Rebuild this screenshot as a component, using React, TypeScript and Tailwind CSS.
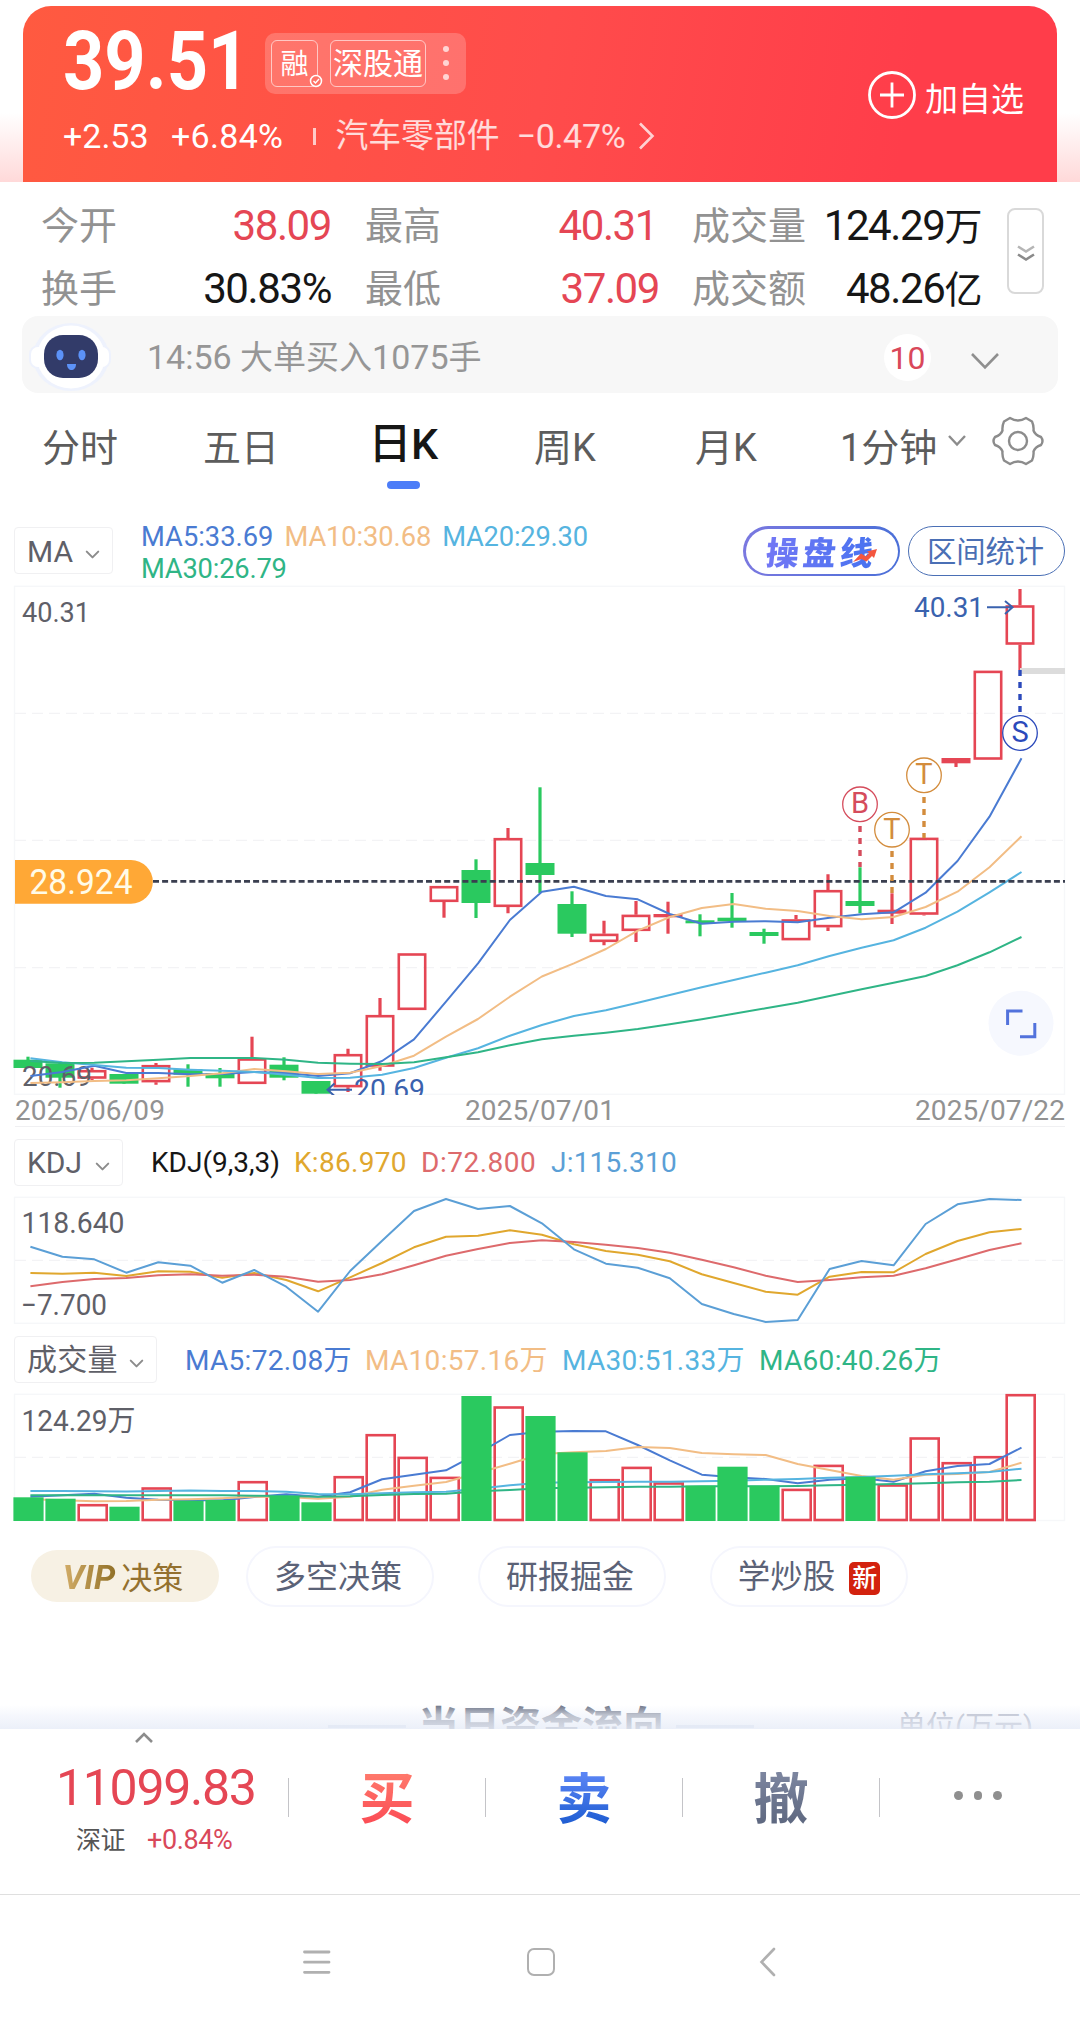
import { ChevronDown } from "lucide-react";

const RED = "#e54654";
const GREEN = "#2ac95f";
const FONT = "Roboto, 'Noto Sans CJK SC', sans-serif";

// [wick top, body top, body bottom, wick bottom, kind]  r = hollow red, f = flat red, g = green
type Candle = [number, number, number, number, "r" | "f" | "g"];

const candles: Candle[] = [
  [1056.7, 1059.7, 1068, 1068, "g"],
  [1063, 1063.3, 1077.7, 1087.7, "g"],
  [1067.7, 1070, 1078.7, 1080, "r"],
  [1074, 1074, 1083.7, 1083.7, "g"],
  [1063, 1065, 1082.3, 1084.7, "r"],
  [1064.3, 1069.3, 1074.7, 1086.7, "g"],
  [1068, 1073, 1078.3, 1086.7, "g"],
  [1036.7, 1058.3, 1084, 1084, "r"],
  [1057.3, 1064.7, 1077.7, 1080.3, "g"],
  [1081, 1081, 1093.7, 1093.7, "g"],
  [1048.7, 1054, 1087.3, 1092, "r"],
  [998, 1015, 1066.7, 1070.7, "r"],
  [953.3, 953.3, 1010, 1010, "r"],
  [886, 886, 902, 917.7, "r"],
  [859.3, 870, 903, 918, "g"],
  [828, 838, 907, 913.3, "r"],
  [787.3, 863, 875, 893, "g"],
  [891.3, 904, 933.7, 937, "g"],
  [920.7, 933.7, 942, 945.3, "r"],
  [901, 914.7, 931, 942, "r"],
  [901.7, 914, 917.3, 933.7, "f"],
  [914.3, 920.3, 923.3, 936.3, "g"],
  [893, 917.7, 921.3, 927.7, "g"],
  [928.7, 932, 936, 943.7, "g"],
  [915, 919.3, 940.3, 940.3, "r"],
  [874.3, 890, 927.3, 931, "r"],
  [867.3, 901, 906, 913.3, "g"],
  [893.3, 909.7, 913.7, 924, "f"],
  [837.7, 837.7, 914.7, 915.5, "r"],
  [758, 758, 763.3, 767, "f"],
  [670.7, 670.7, 759.7, 759.7, "r"],
  [589, 605.3, 644.7, 670, "r"],
];

const ma5 = [1076, 1072, 1065.7, 1073, 1073, 1074.2, 1074, 1072, 1073, 1076, 1073.3, 1061, 1039.3, 1001.7, 963.3, 920, 891.7, 886.7, 896, 899.3, 914, 923.7, 921.7, 921.3, 922.3, 917.7, 914.3, 912.3, 892.7, 861, 816.7, 758.3];
const ma10 = [1083, 1082.3, 1081, 1080.3, 1078.3, 1076, 1073.3, 1069, 1071.3, 1074, 1072.7, 1066, 1055.7, 1036.7, 1019, 996.7, 976.5, 963.3, 949, 930.7, 917, 908, 904, 908.7, 911, 916, 919.3, 917, 907, 891.7, 867.3, 836.3];
const ma20 = [1058.3, 1062.3, 1065, 1067.7, 1068, 1069.7, 1070.7, 1072, 1074.7, 1078, 1077.7, 1074.7, 1068, 1057.7, 1048.3, 1035.7, 1025, 1016, 1010.3, 1002.7, 995, 987.3, 980, 972.7, 965.3, 956, 947.7, 940.3, 927.7, 911.7, 892.3, 872];
const ma30 = [1061, 1063, 1062.7, 1061.3, 1059.7, 1058, 1058, 1058, 1059.7, 1062.7, 1063.7, 1064, 1062.3, 1057.3, 1052.3, 1045.3, 1039.3, 1035.7, 1032.7, 1029, 1024.3, 1019.3, 1013.7, 1008.3, 1002.7, 996, 989.3, 982.7, 976, 965.3, 952.3, 937];

const kdjJ = [1246.7, 1256.7, 1259.3, 1272.7, 1262.3, 1265.7, 1282.7, 1270, 1286.7, 1311.7, 1271, 1240.7, 1211, 1199, 1209, 1206, 1223.3, 1249.3, 1263.7, 1267.7, 1278.3, 1304, 1314, 1322, 1320, 1269, 1261, 1265.3, 1224, 1204.3, 1199, 1200];
const kdjK = [1273, 1273.7, 1272.7, 1276, 1271.3, 1271.7, 1277.7, 1273, 1280, 1291.3, 1277.3, 1263, 1247.3, 1236.7, 1235.7, 1230.3, 1234.7, 1244.3, 1251, 1254.7, 1261.3, 1274.3, 1283, 1291.7, 1294.7, 1276.7, 1272, 1272.3, 1254, 1241, 1232.3, 1229];
const kdjD = [1286.3, 1282, 1279, 1278, 1275.3, 1274.3, 1275.7, 1274.7, 1276.7, 1281.7, 1280, 1274.3, 1265.3, 1255.7, 1249, 1243, 1240.3, 1242, 1244.7, 1248, 1252.7, 1259.7, 1267.3, 1275.7, 1282, 1280, 1277.3, 1275.7, 1268.3, 1259.3, 1250, 1243.3];

const volumes = [1497.3, 1498.7, 1504, 1506.7, 1487.3, 1500.7, 1500, 1481, 1496, 1502.3, 1476, 1434, 1456.7, 1476.7, 1396, 1406.3, 1416, 1452.3, 1479, 1466.7, 1482.3, 1485.7, 1466.7, 1485.7, 1488.7, 1464.7, 1476.7, 1484.3, 1437.3, 1462, 1456, 1394];
const vol5 = [1496.7, 1495.3, 1493.7, 1497.7, 1499.7, 1500.3, 1500.3, 1497, 1494.3, 1496.7, 1492.3, 1479.3, 1474.7, 1470.3, 1453.3, 1435, 1431.7, 1431, 1431.3, 1445, 1460.3, 1474.7, 1477.3, 1479, 1483.3, 1479.7, 1478.3, 1481.7, 1471.3, 1466, 1464, 1447.7];
const vol10 = [1499.3, 1500.3, 1501.3, 1501, 1499.7, 1499.3, 1498.3, 1496.7, 1497, 1498.7, 1496.7, 1489.7, 1485.7, 1482, 1473, 1463.7, 1454, 1452.3, 1451, 1447, 1448, 1453, 1454.3, 1455, 1464, 1470, 1476, 1479.7, 1474.7, 1474, 1472, 1462.7];
const vol30 = [1491, 1491, 1491.3, 1491.6, 1491, 1490.5, 1491, 1491, 1491.7, 1494, 1494.3, 1493.3, 1492.3, 1491.7, 1488.7, 1485.3, 1482.7, 1482.3, 1482, 1481.7, 1481.7, 1481.3, 1480.7, 1479.7, 1479, 1477.7, 1477, 1475.7, 1474.3, 1473.3, 1472, 1468.7];
const vol60 = [1495.3, 1495.3, 1495.3, 1495.3, 1495.3, 1495.3, 1495.3, 1495.7, 1496, 1496.7, 1496.3, 1495, 1494, 1493.7, 1491.3, 1490, 1488.3, 1487.7, 1487.3, 1486.7, 1486.7, 1486.3, 1486.3, 1486.3, 1486, 1485.3, 1484.7, 1484, 1483.3, 1482.3, 1481.7, 1480];

const cx = (i: number) => 28 + 32 * i;

function Line({ data, color }: { data: number[]; color: string }) {
  const points = data.map((y, i) => `${(30.4 + 31.97 * i).toFixed(1)},${y}`).join(" ");
  return <polyline points={points} fill="none" stroke={color} strokeWidth="2" strokeLinejoin="round" />;
}

function Label({ x, y, size, width, color, children }: { x: number; y: number; size: number; width: number; color: string; children: string }) {
  return (
    <text x={x} y={y} fontSize={size} fill={color} textLength={width} lengthAdjust="spacingAndGlyphs">
      {children}
    </text>
  );
}

function Frame({ top, bottom, lines }: { top: number; bottom: number; lines: number[] }) {
  return (
    <>
      <rect x="14.5" y={top} width="1050" height={bottom - top} fill="none" stroke="#f6f7f9" strokeWidth="1.4" />
      {lines.map((y) => (
        <line key={y} x1="15" x2="1064" y1={y} y2={y} stroke="#f3f3f5" strokeWidth="1.2" strokeDasharray="11 6" />
      ))}
    </>
  );
}

function Marker({ x, y, from, to, color, letter }: { x: number; y: number; from: number; to: number; color: string; letter: string }) {
  return (
    <g>
      <line x1={x} x2={x} y1={from} y2={to} stroke={color} strokeWidth="3.4" strokeDasharray="6 6" />
      <circle cx={x} cy={y} r="17.3" fill="#fff" stroke={color} strokeWidth="1.3" />
      <text x={x} y={y + 9} fontSize="29" fill={color} textAnchor="middle">{letter}</text>
    </g>
  );
}

function CandleChart() {
  return (
    <svg width="1080" height="511" viewBox="0 584 1080 511" className="block" fontFamily={FONT}>
      <Frame top={586.3} bottom={1094.3} lines={[713.3, 840.3, 967.7]} />
      {candles.map(([wt, bt, bb, wb, kind], i) => {
        const x = cx(i);
        const color = kind === "g" ? GREEN : RED;
        if (kind === "r") {
          return (
            <g key={i} stroke={color} fill="none">
              <path d={`M${x} ${wt}V${bt}M${x} ${bb}V${wb}`} strokeWidth="3.2" />
              <rect x={x - 13.2} y={bt + 1.2} width="26.4" height={bb - bt - 2.4} strokeWidth="2.6" />
            </g>
          );
        }
        return (
          <g key={i}>
            <line x1={x} x2={x} y1={wt} y2={wb} stroke={color} strokeWidth="3.2" />
            <rect x={x - 14.5} y={bt} width="29" height={bb - bt} fill={color} />
          </g>
        );
      })}
      <Label x={22} y={621.5} size={28} width={68} color="#5f6068">40.31</Label>
      <Label x={22} y={1086} size={28} width={70} color="#5f6068">20.69</Label>
      <Line data={ma5} color="#4a7bd2" />
      <Line data={ma10} color="#f2bd85" />
      <Line data={ma20} color="#56b4e0" />
      <Line data={ma30} color="#2fb586" />

      <line x1="153" x2="1065" y1="881.3" y2="881.3" stroke="#3a3f50" strokeWidth="2.8" strokeDasharray="6 3.1" />
      <path d="M15 860H131A21.8 21.8 0 0 1 131 903.7H15Z" fill="#ffa836" />
      <Label x={29.5} y={893.8} size={34.5} width={103} color="#fffbe8">28.924</Label>

      <path d="M1020 671H1065" stroke="#dcdcdc" strokeWidth="6" />
      <Marker x={860} y={804.3} from={826} to={867} color="#d54c5c" letter="B" />
      <Marker x={892} y={829.7} from={851} to={893} color="#d38c3c" letter="T" />
      <Marker x={924} y={775.3} from={797} to={838} color="#d38c3c" letter="T" />
      <Marker x={1020} y={733} from={670} to={712} color="#2b49bb" letter="S" />

      <Label x={914} y={616.5} size={28} width={70} color="#3a62ae">40.31</Label>
      <path d="M987 607.3H1012M1005 601L1012.5 607.3L1005 614" fill="none" stroke="#3a62ae" strokeWidth="2" />
      <Label x={354} y={1098.5} size={28} width={71} color="#3a62ae">20.69</Label>
      <path d="M352 1089.7H328M334.5 1083.5L327.5 1089.7L334.5 1096" fill="none" stroke="#3a62ae" strokeWidth="2" />

      <circle cx="1021" cy="1023.3" r="32.5" fill="#f6f8fe" />
      <path d="M1007.6 1025V1011H1022.5M1020 1036.8H1034.8V1023" fill="none" stroke="#5272dc" strokeWidth="3" />
    </svg>
  );
}

function KdjChart() {
  return (
    <svg width="1080" height="130" viewBox="0 1196 1080 130" className="block" fontFamily={FONT}>
      <Frame top={1197.3} bottom={1323.3} lines={[1260.3]} />
      <Label x={21.5} y={1233} size={29} width={103} color="#5f6068">118.640</Label>
      <Label x={21} y={1315} size={29} width={86} color="#5f6068">−7.700</Label>
      <Line data={kdjK} color="#e0a72e" />
      <Line data={kdjD} color="#dd6a6c" />
      <Line data={kdjJ} color="#5b9fd6" />
    </svg>
  );
}

function VolumeChart() {
  const solid = (i: number) => candles[i][4] === "g";
  return (
    <svg width="1080" height="132" viewBox="0 1392 1080 132" className="block" fontFamily={FONT}>
      <Frame top={1394.3} bottom={1520.5} lines={[1457.3]} />
      {volumes.map((y, i) =>
        solid(i) ? null : (
          <rect key={i} x={cx(i) - 13.3} y={y + 1.2} width="28" height={1520 - y - 1.2} fill="none" stroke={RED} strokeWidth="2.6" />
        )
      )}
      <Line data={vol5} color="#4a7bd2" />
      <Line data={vol10} color="#f2bd85" />
      <Line data={vol30} color="#56b4e0" />
      <Line data={vol60} color="#2fb586" />
      {volumes.map((y, i) =>
        solid(i) ? <rect key={i} x={cx(i) - 14.6} y={y} width="30.2" height={1521 - y} fill={GREEN} /> : null
      )}
      <Label x={21.5} y={1430.5} size={29} width={114} color="#5f6068">124.29万</Label>
    </svg>
  );
}

function Header() {
  return (
    <div className="h-[182px] bg-[linear-gradient(to_bottom,#fff_62%,#ffd9d9)] px-[23px] pt-1.5">
      <div className="flex h-[176px] justify-between rounded-t-[28px] bg-[linear-gradient(100deg,#ff5a40,#ff4c4b_50%,#ff3d4a_85%)] text-white">
        <div className="pl-10">
          <div className="flex h-[114px] items-center">
            <div className="-mt-1 w-[202px] leading-none">
              <span className="inline-block origin-left scale-x-[0.89] text-[81px] font-bold">39.51</span>
            </div>
            <div className="flex h-[61px] w-[201px] items-center rounded-[10px] bg-white/20 pl-1.5">
              <div className="relative flex h-[47px] w-[47px] items-center justify-center rounded-md border border-white/60 text-[28px] leading-none">
                <span className="mt-1">融</span>
                <svg width="14" height="14" viewBox="0 0 14 14" className="absolute -right-1.5 -bottom-0.5">
                  <circle cx="7" cy="7" r="5.5" fill="#ff7266" stroke="#fff" strokeWidth="1.5" />
                  <path d="M4.5 7L6.500 9L10 5" fill="none" stroke="#fff" strokeWidth="1.4" />
                </svg>
              </div>
              <div className="ml-3 flex h-[47px] w-24 items-center justify-center rounded-md border border-white/60 text-[30px] leading-none">
                <span className="mt-0.5">深股通</span>
              </div>
              <div className="ml-[17px] flex flex-col gap-2">
                <i className="size-1.5 rounded-full bg-white/70" />
                <i className="size-1.5 rounded-full bg-white/70" />
                <i className="size-1.5 rounded-full bg-white/70" />
              </div>
            </div>
          </div>
          <div className="flex h-8 items-center text-[34px] leading-none whitespace-nowrap">
            <span className="w-[108px]">+2.53</span>
            <span className="w-[142px] tracking-[0.3px]">+6.84%</span>
            <i className="mr-5 h-[17px] w-[2.5px] bg-white/70" />
            <span className="w-[181px] text-[32.8px] text-white/80">汽车零部件</span>
            <span className="w-[121px] tracking-[-0.3px] text-white/80">−0.47%</span>
            <svg width="18" height="28" viewBox="0 0 18 28" className="opacity-75">
              <path d="M2 1.5L14.5 14L2 26.5" fill="none" stroke="#fff" strokeWidth="2.6" />
            </svg>
          </div>
        </div>
        <div className="flex h-[178px] items-center pr-[33px]">
          <svg width="50" height="50" viewBox="0 0 50 50" fill="none" stroke="#fff" strokeWidth="2.8">
            <circle cx="25" cy="25" r="22.5" />
            <path d="M13 25H37M25 12.5V37.5" />
          </svg>
          <span className="mt-2 ml-2 text-[33px] leading-none">加自选</span>
        </div>
      </div>
    </div>
  );
}

function Stats() {
  const name = "text-[38px] text-[#929292]";
  const value = "text-right tracking-[-1.4px]";
  return (
    <div className="flex h-[134px] pt-3">
      <div className="grid h-[126px] w-[982px] grid-cols-[146px_144px_34px_118px_176px_33px_115px_174px] grid-rows-2 items-center pl-[41px] text-[42px] leading-none whitespace-nowrap">
        <span className={name}>今开</span>
        <span className={value + " text-[#e54654]"}>38.09</span>
        <i />
        <span className={name}>最高</span>
        <span className={value + " pr-0.5 text-[#e54654]"}>40.31</span>
        <i />
        <span className={name}>成交量</span>
        <span className={value + " text-[#161616]"}>124.29<span className="text-[38px]">万</span></span>
        <span className={name}>换手</span>
        <span className={value + " text-[#161616]"}>30.83%</span>
        <i />
        <span className={name}>最低</span>
        <span className={value + " text-[#e54654]"}>37.09</span>
        <i />
        <span className={name}>成交额</span>
        <span className={value + " text-[#161616]"}>48.26<span className="text-[38px]">亿</span></span>
      </div>
      <div className="mt-3.5 ml-[25px] flex h-[86px] w-[37px] items-center justify-center rounded-lg border-[2.5px] border-[#d9d9d9]">
        <svg width="20" height="18" viewBox="0 0 20 18" className="mt-1" fill="none" strokeWidth="2.6">
          <path d="M2 2.5L10 7.5L18 2.5" stroke="#b5b5b5" />
          <path d="M2 10.5L10 15.5L18 10.5" stroke="#8a8a8a" />
        </svg>
      </div>
    </div>
  );
}

function Notice() {
  return (
    <div className="mx-[22px] flex h-[77px] items-center rounded-2xl bg-[#f7f7f7] leading-none">
      <svg width="84" height="72" viewBox="0 0 84 72" className="mt-1 ml-1.5">
        <ellipse cx="43" cy="36" rx="38" ry="34" fill="#eef2fd" />
        <rect x="1" y="24" width="82" height="24" rx="9" fill="#eef2fd" />
        <rect x="3" y="26" width="78" height="20" rx="7" fill="#fff" />
        <ellipse cx="43" cy="36" rx="34" ry="31.5" fill="#fff" />
        <rect x="16" y="14" width="54" height="43" rx="19" fill="#323b69" />
        <ellipse cx="32" cy="34" rx="3.6" ry="5.2" fill="#5c92f8" />
        <ellipse cx="54" cy="34" rx="3.6" ry="5.2" fill="#5c92f8" />
        <path d="M39 43H48C48 51 39 51 39 43Z" fill="#5c92f8" />
      </svg>
      <span className="mt-1 ml-[35px] flex-1 text-[34px] text-[#969696]">
        14:56 <span className="text-[33px]">大单买入</span>1075<span className="text-[33px]">手</span>
      </span>
      <span className="mt-1.5 flex size-[47px] items-center justify-center rounded-full bg-white text-[32px] text-[#d9485a]">10</span>
      <svg width="30" height="18" viewBox="0 0 30 18" className="mt-3 mr-[58px] ml-[39px]">
        <path d="M2 2L15 15.5L28 2" fill="none" stroke="#8f8f8f" strokeWidth="2.6" />
      </svg>
    </div>
  );
}

function PeriodTabs() {
  return (
    <div className="flex h-[106px] pt-[22px] text-[38px] leading-none whitespace-nowrap text-[#5c5c5c]">
      <span className="mt-3.5 ml-[42px] w-[161px]">分时</span>
      <span className="mt-3.5 w-[163px]">五日</span>
      <div className="flex w-[74px] flex-col items-center text-[#161616]">
        <span className="mt-2 h-[58px] text-[43px] font-medium tracking-[-0.5px]">日K</span>
        <i className="h-2 w-[33px] rounded-full bg-[#4c7df8]" />
      </div>
      <span className="mt-3.5 ml-[94px] w-[161px]">周K</span>
      <span className="mt-3.5 w-[145px]">月K</span>
      <span className="mt-3.5">1分钟</span>
      <svg width="20" height="14" viewBox="0 0 20 14" className="mt-[19px] ml-[10px]">
        <path d="M2 2L10 10.5L18 2" fill="none" stroke="#8c8c8c" strokeWidth="2.4" />
      </svg>
      <svg width="52" height="52" viewBox="0 0 52 52" className="ml-[25px]" fill="none" stroke="#8c8c8c" strokeWidth="2.4">
        <path
          strokeLinejoin="round"
          d="M18 3Q26 8 34 3L40 6.5Q42 11 41.5 15.5Q43 20 49 22Q52 26 49 30Q43 32 41.5 36.5Q42 41 40 45.5L34 49Q26 44 18 49L12 45.5Q10 41 10.5 36.5Q9 32 3 30Q0 26 3 22Q9 20 10.5 15.5Q10 11 12 6.5Z"
        />
        <circle cx="26" cy="26" r="9" />
      </svg>
    </div>
  );
}

function Selector({ children, width }: { children: string; width: string }) {
  return (
    <div className={"flex h-[47px] shrink-0 items-center justify-between rounded border border-[#f0f0f2] pr-2 pl-3 text-[30px] leading-none text-[#5f6068] " + width}>
      <span className="mt-0.5">{children}</span>
      <ChevronDown size={23} strokeWidth={2.1} className="mt-2 text-[#8c8c8c]" />
    </div>
  );
}

function MaRow() {
  return (
    <div className="flex h-[85px] pl-3.5 text-[27.3px] leading-none whitespace-nowrap">
      <div className="mt-7"><Selector width="w-[99px]">MA</Selector></div>
      <div className="mt-[22px] ml-7 w-[500px] leading-8">
        <div>
          <span className="mr-[11px] text-[#4a7bd2]">MA5:33.69</span>
          <span className="mr-[11px] tracking-[-0.1px] text-[#f2bd85]">MA10:30.68</span>
          <span className="tracking-[-0.2px] text-[#56b4e0]">MA20:29.30</span>
        </div>
        <div className="tracking-[-0.2px] text-[#2fb586]">MA30:26.79</div>
      </div>
      <div className="mt-[27px] ml-[102px] h-[50px] w-[157px] rounded-full bg-[linear-gradient(90deg,#7a78e0,#4a6fd8)] p-[2.5px]">
        <div className="relative flex h-full items-center justify-center rounded-full bg-white">
          <span className="mt-1 -skew-x-6 bg-[linear-gradient(90deg,#7377f5,#4673f0)] bg-clip-text text-[33px] font-black tracking-[4px] text-transparent">操盘线</span>
          <svg width="26" height="16" viewBox="0 0 26 16" className="absolute right-5 bottom-2.5">
            <path d="M1 14L9 5.5L14 8.5L17 5L15 3.5L25 1L22 10L20 8L14.5 13.5L9.5 11Z" fill="#f4563f" />
          </svg>
        </div>
      </div>
      <div className="mt-[27px] ml-2 flex h-[50px] w-[157px] items-center justify-center rounded-full border border-[#4a6fb5] text-[29.3px] text-[#4a6fb5]">
        <span className="mt-1 -ml-0.5">区间统计</span>
      </div>
    </div>
  );
}

function KdjRow() {
  return (
    <div className="flex h-[68px] items-center pl-3.5 text-[28px] leading-none whitespace-nowrap">
      <Selector width="w-[109px]">KDJ</Selector>
      <span className="mt-0.5 ml-7 w-[143px] text-[#161616]">KDJ(9,3,3)</span>
      <span className="mt-0.5 w-[127px] tracking-[0.3px] text-[#e0a72e]">K:86.970</span>
      <span className="mt-0.5 w-[130px] tracking-[0.5px] text-[#dd6a6c]">D:72.800</span>
      <span className="mt-0.5 tracking-[0.2px] text-[#5b9fd6]">J:115.310</span>
    </div>
  );
}

function VolumeRow() {
  return (
    <div className="flex h-[66px] items-center pl-3.5 text-[28px] leading-none tracking-[0.3px] whitespace-nowrap">
      <Selector width="w-[143px]">成交量</Selector>
      <span className="mt-1 ml-7 w-[180px] text-[#4a7bd2]">MA5:72.08万</span>
      <span className="mt-1 w-[197px] text-[#f2bd85]">MA10:57.16万</span>
      <span className="mt-1 w-[197px] text-[#56b4e0]">MA30:51.33万</span>
      <span className="mt-1 text-[#2fb586]">MA60:40.26万</span>
    </div>
  );
}

function Shortcuts() {
  const pill = "flex h-[61px] items-center justify-center rounded-full border-[2.5px] border-[#f5f6fd] text-[32px] text-[#5b6277]";
  return (
    <div className="flex h-[104px] items-center pl-[31px] leading-none whitespace-nowrap">
      <div className="mr-[27px] flex h-[52px] w-[188px] items-center justify-center rounded-full bg-[#f7f1e4]">
        <span className="mt-0.5 bg-[linear-gradient(90deg,#d3ad68,#8a6a20)] bg-clip-text pr-1.5 text-[34px] font-bold text-transparent italic">VIP</span>
        <span className="mt-1 mr-1 text-[31px] text-[#94712f]">决策</span>
      </div>
      <div className={pill + " mr-11 w-[188px]"}><span className="mt-0.5 -ml-1">多空决策</span></div>
      <div className={pill + " mr-11 w-[188px]"}><span className="mt-0.5 -ml-1">研报掘金</span></div>
      <div className={pill + " w-[198px]"}>
        <span className="mt-0.5 text-[32.5px]">学炒股</span>
        <span className="mt-1 ml-3.5 flex h-[33px] w-[31px] items-center justify-center rounded-[5px] bg-[#d3220e] text-[25px] font-medium text-white">新</span>
      </div>
    </div>
  );
}

function FundFlow() {
  return (
    <div className="relative h-[101px] overflow-hidden">
      <div className="flex h-full items-start pt-[79px] pl-[328px] leading-none whitespace-nowrap">
        <i className="mt-[18px] h-[3px] w-[78px] bg-[#cfd9e8]" />
        <h2 className="ml-3 text-[41px] font-bold text-[#6d7486]">当日资金流向</h2>
        <i className="mt-[18px] ml-3 h-[3px] w-[78px] bg-[#cfd9e8]" />
        <span className="mt-[6px] ml-[143px] text-[29px] text-[#8b92a6]">单位(万元)</span>
      </div>
      <div className="absolute inset-x-0 bottom-0 h-6 bg-[linear-gradient(to_bottom,rgba(245,247,253,0),rgba(240,243,251,0.6)_40%,rgba(232,237,248,0.85))]" />
    </div>
  );
}

function TradeBar() {
  const divider = "h-[39px] w-px bg-[#c4c4c8]";
  const action = "mt-1 w-[196px] bg-clip-text text-center text-[55px] font-bold text-transparent";
  return (
    <div className="flex h-[166px] border-b-[1.5px] border-[#dfdfdf] leading-none whitespace-nowrap">
      <div className="w-[288px]">
        <svg width="20" height="13" viewBox="0 0 20 13" className="mt-[2px] ml-[134px]">
          <path d="M2 11L10 3L18 11" fill="none" stroke="#8c8c8c" strokeWidth="2.6" />
        </svg>
        <div className="mt-[19px] ml-[56px] text-[50px] tracking-[-1.3px] text-[#e54654]">11099.83</div>
        <div className="mt-3.5 ml-[76px] flex items-center text-[27px] tracking-[-0.4px] text-[#d9485a]">
          <span className="w-[71px] text-[25px] text-[#555]">深证</span>+0.84%
        </div>
      </div>
      <div className="flex h-[137px] items-center">
        <i className={divider} />
        <span className={action + " bg-[linear-gradient(to_bottom,#ff7a6c,#fb4a54)]"}>买</span>
        <i className={divider} />
        <span className={action + " bg-[linear-gradient(to_bottom,#5c86f6,#1c5bd0)]"}>卖</span>
        <i className={divider} />
        <span className={action + " bg-[linear-gradient(to_bottom,#7d86a0,#5c667e)]"}>撤</span>
        <i className={divider} />
        <div className="-mt-1 flex gap-[11px] pl-[74px]">
          <i className="size-[8.5px] rounded-full bg-[#8f8f8f]" />
          <i className="size-[8.5px] rounded-full bg-[#8f8f8f]" />
          <i className="size-[8.5px] rounded-full bg-[#8f8f8f]" />
        </div>
      </div>
    </div>
  );
}

function SystemNav() {
  return (
    <div className="flex h-[133px] items-center pl-[302px]">
      <svg width="30" height="30" viewBox="0 0 30 30" stroke="#b0b0b0" strokeWidth="2.8" strokeLinecap="round">
        <path d="M2.5 5H27M2.5 15.2H27M2.5 25.3H27" />
      </svg>
      <div className="ml-[195px] size-7 rounded-[7px] border-[2.5px] border-[#b0b0b0]" />
      <svg width="20" height="30" viewBox="0 0 20 30" className="ml-[203px]">
        <path d="M16 2L3.5 15L16 28" fill="none" stroke="#b0b0b0" strokeWidth="2.6" strokeLinecap="round" />
      </svg>
    </div>
  );
}

export default function App() {
  return (
    <div className="h-[2024px] w-[1080px] overflow-hidden bg-white font-[Roboto,'Noto_Sans_CJK_SC',sans-serif]">
      <Header />
      <Stats />
      <Notice />
      <PeriodTabs />
      <MaRow />
      <CandleChart />
      <div className="mx-[15px] mb-px flex h-8 items-center justify-between border-b border-[#f0f0f2] text-[28px] leading-none tracking-[0.1px] text-[#929292]">
        <span>2025/06/09</span>
        <span>2025/07/01</span>
        <span>2025/07/22</span>
      </div>
      <KdjRow />
      <KdjChart />
      <VolumeRow />
      <VolumeChart />
      <Shortcuts />
      <FundFlow />
      <TradeBar />
      <SystemNav />
    </div>
  );
}
